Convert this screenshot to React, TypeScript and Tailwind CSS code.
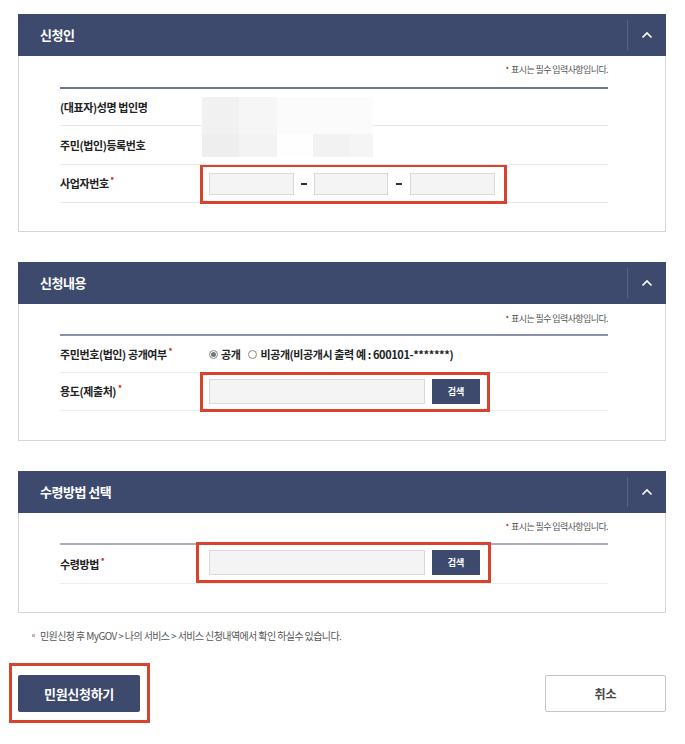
import React from "react";

const FONT = { fontFamily: '"Noto Sans CJK KR", "Noto Sans", sans-serif' };

function Chevron() {
  return (
    <svg width="12" height="8" viewBox="0 0 12 8" fill="none">
      <path d="M1.5 6.5 L6 2 L10.5 6.5" stroke="white" strokeWidth="1.6" />
    </svg>
  );
}

function Header({ title }: { title: string }) {
  return (
    <div className="flex h-[42px] items-center bg-[#3d4a6e]">
      <div className="flex-1 pl-[22px] text-[13px] font-bold tracking-[-0.5px] text-white">{title}</div>
      <div className="flex h-[30px] w-[39px] items-center justify-center border-l border-[#56628a]">
        <Chevron />
      </div>
    </div>
  );
}

function Req() {
  return <span className="relative -top-[7px] ml-[2px] text-[9px] leading-none text-[#d93a2b]">•</span>;
}

function Note() {
  return (
    <div className="flex h-[14px] items-center justify-end text-[9px] tracking-[-0.6px] text-[#555]">
      <span className="relative -top-[3px] mr-[3px] text-[8px] text-[#d93a2b]">•</span>
      표시는 필수 입력사항입니다.
    </div>
  );
}

function Label({ children, req }: { children: React.ReactNode; req?: boolean }) {
  return (
    <div className="w-[140px] shrink-0 text-[11px] font-bold tracking-[-0.4px] text-[#222]">
      {children}
      {req && <Req />}
    </div>
  );
}

function RedBox({ children, className }: { children: React.ReactNode; className?: string }) {
  return (
    <div className={"flex items-center border-[3px] border-[#d8432f] " + (className || "")}>{children}</div>
  );
}

function SearchField() {
  return (
    <>
      <div className="h-[25px] w-[216px] border border-[#d9d9d9] bg-[#f4f4f4]" />
      <div className="ml-[7px] flex h-[25px] w-[48px] items-center justify-center bg-[#3d4a6e] text-[9px] font-bold text-white">
        검색
      </div>
    </>
  );
}

const blurRow1 = ["#f1f1f1", "#f6f6f6", "#fbfbfb", "#fbfbfb", "#fbfbfb"];
const blurRow2 = ["#eeeeee", "#f3f3f3", "#fefefe", "#f2f2f2", "#f5f5f5"];
const blurW = [37, 38, 36, 37, 23];

export default function App() {
  return (
    <div className="min-h-[744px] w-[685px] bg-white pt-[14px]" style={FONT}>
      <div className="px-[18px] pr-[19px]">
        {/* Section 1 */}
        <Header title="신청인" />
        <div className="border border-t-0 border-[#d6d6d6] pb-[28px] pl-[41px] pr-[57px] pt-[7px]">
          <Note />
          <div className="mt-[10px] border-t-2 border-[#6f7796]">
            <div className="relative">
              <div className="flex h-[37px] items-center border-b border-[#e8e8e8]">
                <Label>(대표자)성명 법인명</Label>
              </div>
              <div className="flex h-[39px] items-center border-b border-[#e8e8e8]">
                <Label>주민(법인)등록번호</Label>
              </div>
              <div className="absolute left-[142px] top-[8px] flex flex-col">
                <div className="flex h-[37px]">
                  {blurRow1.map((c, i) => (
                    <div key={i} style={{ background: c, width: blurW[i] }} />
                  ))}
                </div>
                <div className="flex h-[23px]">
                  {blurRow2.map((c, i) => (
                    <div key={i} style={{ background: c, width: blurW[i] }} />
                  ))}
                </div>
              </div>
            </div>
            <div className="flex h-[38px] items-center border-b border-[#e8e8e8]">
              <Label req>사업자번호</Label>
              <RedBox className="h-[40px] w-[307px] pl-[6px]">
                <div className="h-[22px] w-[85px] border border-[#d9d9d9] bg-[#f4f4f4]" />
                <div className="mx-[7px] h-[2px] w-[6px] bg-[#333]" />
                <div className="h-[22px] w-[74px] border border-[#d9d9d9] bg-[#f4f4f4]" />
                <div className="mx-[8px] h-[2px] w-[6px] bg-[#333]" />
                <div className="h-[22px] w-[85px] border border-[#d9d9d9] bg-[#f4f4f4]" />
              </RedBox>
            </div>
          </div>
        </div>

        {/* Section 2 */}
        <div className="mt-[30px]">
          <Header title="신청내용" />
          <div className="border border-t-0 border-[#d6d6d6] pb-[29px] pl-[41px] pr-[57px] pt-[8px]">
            <Note />
            <div className="mt-[8px] border-t-2 border-[#8a90a8]">
              <div className="flex h-[37px] items-center border-b border-[#eeeeee]">
                <Label req>주민번호(법인) 공개여부</Label>
                <div className="ml-[9px] flex items-center text-[11px] font-bold tracking-[-0.4px] text-[#222]">
                  <span className="mr-[3px] flex h-[9px] w-[9px] items-center justify-center rounded-full border border-[#888]">
                    <span className="h-[5px] w-[5px] rounded-full bg-[#777]" />
                  </span>
                  공개
                  <span className="ml-[8px] mr-[3px] h-[9px] w-[9px] rounded-full border border-[#888]" />
                  비공개(비공개시 출력 예 : 600101-*******)
                </div>
              </div>
              <div className="flex h-[38px] items-center border-b border-[#eeeeee]">
                <Label req>용도(제출처)</Label>
                <RedBox className="h-[40px] w-[290px] pl-[6px]">
                  <SearchField />
                </RedBox>
              </div>
            </div>
          </div>
        </div>

        {/* Section 3 */}
        <div className="mt-[30px]">
          <Header title="수령방법 선택" />
          <div className="border border-t-0 border-[#d6d6d6] pb-[28px] pl-[41px] pr-[57px] pt-[7px]">
            <Note />
            <div className="mt-[9px] border-t-2 border-[#a8adbd]">
              <div className="flex h-[39px] items-center border-b border-[#eeeeee]">
                <Label req>수령방법</Label>
                <RedBox className="-ml-[4px] -mt-[3px] h-[41px] w-[295px] pl-[10px]">
                  <SearchField />
                </RedBox>
              </div>
            </div>
          </div>
        </div>

        {/* footnote */}
        <div className="mt-[15px] flex items-center pl-[14px] text-[10px] tracking-[-0.6px] text-[#555]">
          <span className="mr-[5px] h-[3px] w-[3px] bg-[#bbb]" />
          민원신청 후 MyGOV &gt; 나의 서비스 &gt; 서비스 신청내역에서 확인 하실수 있습니다.
        </div>
      </div>

      {/* buttons */}
      <div className="mt-[20px] flex items-start justify-between pl-[9px] pr-[19px]">
        <div className="h-[60px] w-[141px] border-[3px] border-[#d8432f] pl-[6px] pt-[9px]">
          <div className="flex h-[37px] w-[122px] items-center justify-center rounded-[2px] bg-[#3d4a6e] text-[13px] font-bold tracking-[-0.3px] text-white">
            민원신청하기
          </div>
        </div>
        <div className="mt-[12px] flex h-[37px] w-[121px] items-center justify-center rounded-[2px] border border-[#c4c4c4] bg-white text-[12px] font-bold text-[#444]">
          취소
        </div>
      </div>
    </div>
  );
}
